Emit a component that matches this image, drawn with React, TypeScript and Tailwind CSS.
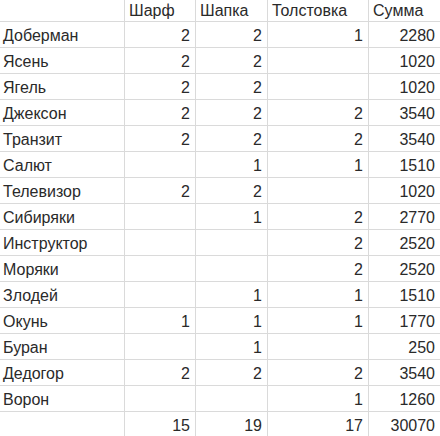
const rows: [string, string, string, string, string][] = [
  ["Доберман", "2", "2", "1", "2280"],
  ["Ясень", "2", "2", "", "1020"],
  ["Ягель", "2", "2", "", "1020"],
  ["Джексон", "2", "2", "2", "3540"],
  ["Транзит", "2", "2", "2", "3540"],
  ["Салют", "", "1", "1", "1510"],
  ["Телевизор", "2", "2", "", "1020"],
  ["Сибиряки", "", "1", "2", "2770"],
  ["Инструктор", "", "", "2", "2520"],
  ["Моряки", "", "", "2", "2520"],
  ["Злодей", "", "1", "1", "1510"],
  ["Окунь", "1", "1", "1", "1770"],
  ["Буран", "", "1", "", "250"],
  ["Дедогор", "2", "2", "2", "3540"],
  ["Ворон", "", "", "1", "1260"],
  ["", "15", "19", "17", "30070"],
];

const cols = "grid grid-cols-[125px_71px_72px_101px_1fr]";

export default function App() {
  return (
    <div className="w-[440px] h-[436px] overflow-hidden bg-white text-[16px] text-[#2a2a2a] font-['Liberation_Sans',Arial,sans-serif]">
      <div className={`${cols} h-[22px] border-b border-[#dadada]`}>
        <div className="border-r border-[#dadada]" />
        <div className="border-r border-[#dadada] px-[4px] pt-[2px] leading-[18px]">Шарф</div>
        <div className="border-r border-[#dadada] px-[4px] pt-[2px] leading-[18px]">Шапка</div>
        <div className="border-r border-[#dadada] px-[4px] pt-[2px] leading-[18px]">Толстовка</div>
        <div className="px-[4px] pt-[2px] leading-[18px]">Сумма</div>
      </div>
      {rows.map((r, i) => (
        <div key={i} className={`${cols} h-[26px] border-b border-[#dadada]`}>
          <div className="border-r border-[#dadada] px-[3px] pt-[5px] leading-[18px]">{r[0]}</div>
          {r.slice(1).map((v, j) => (
            <div
              key={j}
              className={`px-[5px] pt-[5px] leading-[18px] text-right ${j < 3 ? "border-r border-[#dadada]" : ""}`}
            >
              {v}
            </div>
          ))}
        </div>
      ))}
    </div>
  );
}
